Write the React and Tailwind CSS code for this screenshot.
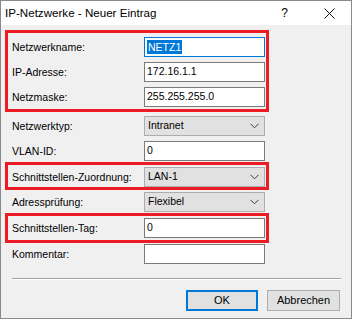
const font = { fontFamily: '"Liberation Sans", Arial, sans-serif' }

function Label({ children }) {
  return <div className="w-[132px] shrink-0 text-[10.5px] leading-none text-black">{children}</div>
}

function TextBox({ value, selected }) {
  return (
    <div
      className={`flex h-5 w-[121px] items-center border bg-white pl-[2px] text-[10.5px] text-black ${
        selected ? 'border-[#0078d7]' : 'border-[#7a7a7a]'
      }`}
    >
      {selected ? <span className="bg-[#0078d7] px-[1px] leading-[14px] text-white">{value}</span> : value}
    </div>
  )
}

function Select({ value }) {
  return (
    <div className="flex h-5 w-[121px] items-center justify-between border border-[#adadad] bg-[#e1e1e1] pl-[3px] pr-[5px] text-[10.5px] text-black">
      <span>{value}</span>
      <svg width="9" height="6" viewBox="0 0 9 6">
        <path d="M0.5 0.8 L4.5 4.8 L8.5 0.8" fill="none" stroke="#3c3c3c" strokeWidth="1" />
      </svg>
    </div>
  )
}

function Row({ label, children, className = '' }) {
  return (
    <div className={`flex h-5 items-center ${className}`}>
      <Label>{label}</Label>
      {children}
    </div>
  )
}

function RedBox({ children, className = '' }) {
  return (
    <div className={`-ml-[7px] w-[264px] border-[3px] border-[#ed1c24] pl-[4px] ${className}`}>{children}</div>
  )
}

export default function App() {
  return (
    <div style={font} className="h-[321px] w-[353px] bg-white">
      <div className="flex h-[319px] w-[352px] flex-col border border-[#8a8a8a] bg-[#f0f0f0]">
        <div className="flex h-[24px] shrink-0 items-center bg-white">
          <span className="ml-[4px] text-[11.6px] text-black">IP-Netzwerke - Neuer Eintrag</span>
          <span className="ml-auto mr-[36px] text-[12px] text-black">?</span>
          <svg width="11" height="11" viewBox="0 0 11 11" className="mr-[16px]">
            <path d="M0.5 0.5 L10.5 10.5 M10.5 0.5 L0.5 10.5" stroke="#111" strokeWidth="1" />
          </svg>
        </div>

        <div className="flex flex-1 flex-col pl-[11px]">
          <RedBox className="mt-[5px] pt-[4px] pb-[2px]">
            <div className="flex flex-col gap-[5px]">
              <Row label="Netzwerkname:">
                <TextBox value="NETZ1" selected />
              </Row>
              <Row label="IP-Adresse:">
                <TextBox value="172.16.1.1" />
              </Row>
              <Row label="Netzmaske:">
                <TextBox value="255.255.255.0" />
              </Row>
            </div>
          </RedBox>

          <Row label="Netzwerktyp:" className="mt-[4px]">
            <Select value="Intranet" />
          </Row>
          <Row label="VLAN-ID:" className="mt-[5px]">
            <TextBox value="0" />
          </Row>

          <RedBox className="mt-[1px] pt-[2px]">
            <Row label="Schnittstellen-Zuordnung:">
              <Select value="LAN-1" />
            </Row>
          </RedBox>

          <Row label="Adressprüfung:" className="mt-[2px]">
            <Select value="Flexibel" />
          </Row>

          <RedBox className="mt-[1px] pt-[2px] pb-[2px]">
            <Row label="Schnittstellen-Tag:">
              <TextBox value="0" />
            </Row>
          </RedBox>

          <Row label="Kommentar:" className="mt-[1px]">
            <TextBox value="" />
          </Row>

          <div className="mt-[14px] mr-[10px] border-t border-b border-t-[#a0a0a0] border-b-white" />

          <div className="mt-[10px] mr-[11px] flex justify-end gap-[9px]">
            <button className="h-[21px] w-[72px] border-2 border-[#0078d7] bg-[#e1e1e1] text-[11px] text-black">
              OK
            </button>
            <button className="h-[21px] w-[73px] border border-[#adadad] bg-[#e1e1e1] text-[11px] text-black">
              Abbrechen
            </button>
          </div>
        </div>
      </div>
    </div>
  )
}
